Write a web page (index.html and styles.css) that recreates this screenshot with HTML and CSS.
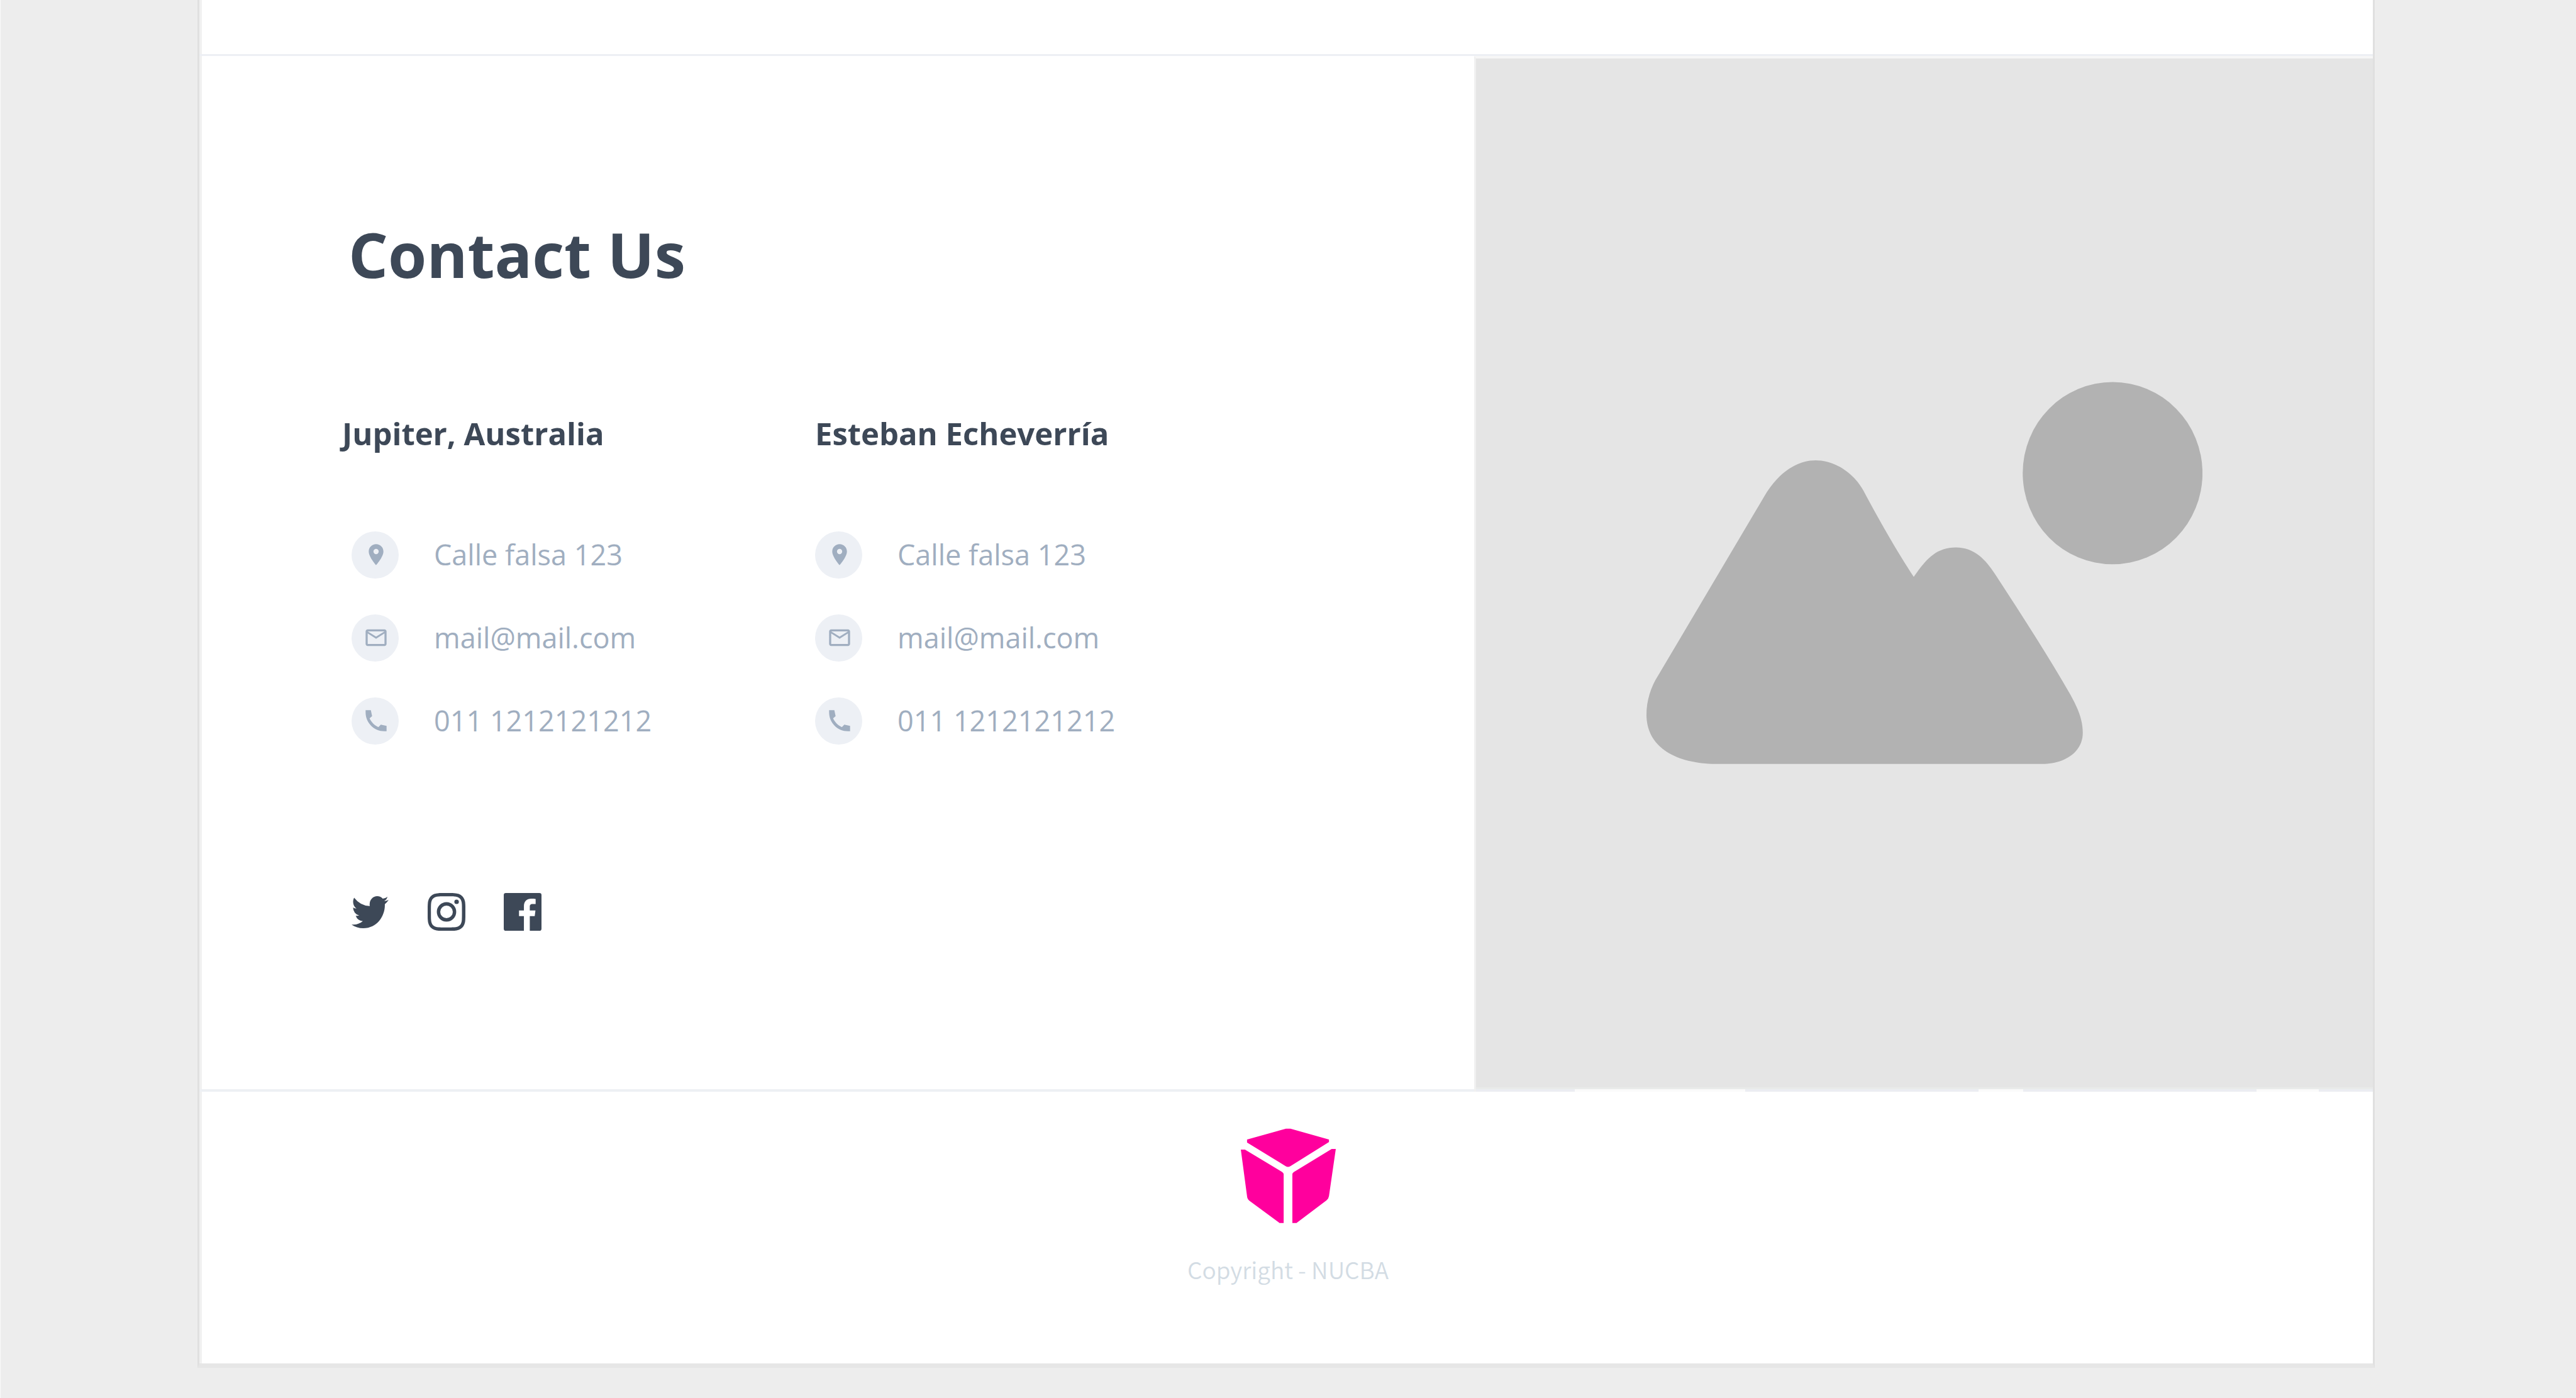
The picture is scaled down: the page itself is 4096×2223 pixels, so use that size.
FILE: index.html
```html
<!DOCTYPE html>
<html lang="en">
<head>
<meta charset="utf-8">
<title>Contact Us - NUCBA</title>
<link rel="stylesheet" href="styles.css">
</head>
<body>
<svg class="sprite" aria-hidden="true">
  <symbol id="pin" viewBox="0 0 24 24"><path fill-rule="evenodd" d="M12 2C8.100 2 5 5.100 5 9c0 5.200 7 13 7 13s7-7.800 7-13c0-3.900-3.100-7-7-7zm0 9.500a2.500 2.500 0 1 1 0-5 2.500 2.500 0 0 1 0 5z"/></symbol>
  <symbol id="mail" viewBox="0 0 24 24"><path fill-rule="evenodd" d="M20 4H4c-1.100 0-2 .9-2 2v12c0 1.100.9 2 2 2h16c1.100 0 2-.9 2-2V6c0-1.100-.9-2-2-2zm0 14H4V8l8 5 8-5v10zm-8-7L4 6h16l-8 5z"/></symbol>
  <symbol id="phone" viewBox="0 0 24 24"><path d="M2 2h5l1.200 5.600-2.400 2.200c1.600 3.600 4.700 6.700 8.400 8.400l2.300-2.500L22 17v5h-2C10 22 2 14 2 4z"/></symbol>
</svg>
<div class="page">
  <div class="previous"></div>
  <main class="contact">
    <section class="details">
      <h1 class="title">Contact Us</h1>
      <div class="offices">
        <address class="office">
          <h2 class="city city-first">Jupiter, Australia</h2>
          <ul class="lines">
            <li class="line"><span class="badge"><svg class="glyph"><use href="#pin"/></svg></span>Calle falsa 123</li>
            <li class="line"><span class="badge"><svg class="glyph"><use href="#mail"/></svg></span><a class="link" href="mailto:mail@mail.com">mail@mail.com</a></li>
            <li class="line"><span class="badge"><svg class="glyph"><use href="#phone"/></svg></span><a class="link" href="tel:0111212121212">011 1212121212</a></li>
          </ul>
        </address>
        <address class="office">
          <h2 class="city">Esteban Echeverría</h2>
          <ul class="lines">
            <li class="line"><span class="badge"><svg class="glyph"><use href="#pin"/></svg></span>Calle falsa 123</li>
            <li class="line"><span class="badge"><svg class="glyph"><use href="#mail"/></svg></span><a class="link" href="mailto:mail@mail.com">mail@mail.com</a></li>
            <li class="line"><span class="badge"><svg class="glyph"><use href="#phone"/></svg></span><a class="link" href="tel:0111212121212">011 1212121212</a></li>
          </ul>
        </address>
      </div>
      <nav class="social" aria-label="Social networks">
        <a class="network" href="#twitter" aria-label="Twitter"><svg class="brand brand-wide" viewBox="2 4 20 16" preserveAspectRatio="none"><path d="M19.633 7.997c.013.175.013.349.013.523 0 5.325-4.053 11.461-11.460 11.461-2.282 0-4.402-.661-6.186-1.809.324.037.636.05.973.05a8.070 8.070 0 0 0 5.001-1.721 4.036 4.036 0 0 1-3.767-2.793c.249.037.499.062.761.062.361 0 .724-.05 1.061-.137a4.027 4.027 0 0 1-3.230-3.953v-.05c.537.299 1.160.486 1.820.511a4.022 4.022 0 0 1-1.796-3.354c0-.748.199-1.434.548-2.032a11.457 11.457 0 0 0 8.306 4.215c-.062-.3-.1-.611-.1-.923a4.026 4.026 0 0 1 4.028-4.028c1.160 0 2.207.486 2.943 1.272a7.957 7.957 0 0 0 2.556-.973 4.020 4.020 0 0 1-1.771 2.220 8.073 8.073 0 0 0 2.319-.624 8.645 8.645 0 0 1-2.019 2.083z"/></svg></a>
        <a class="network" href="#instagram" aria-label="Instagram"><svg class="brand" viewBox="3 3 18 18"><path fill-rule="evenodd" d="M11.999 7.377a4.623 4.623 0 1 0 0 9.248 4.623 4.623 0 0 0 0-9.248zm0 7.627a3.004 3.004 0 1 1 0-6.008 3.004 3.004 0 0 1 0 6.008z"/><circle cx="16.806" cy="7.207" r="1.078"/><path fill-rule="evenodd" d="M20.533 6.111A4.605 4.605 0 0 0 17.900 3.479a6.606 6.606 0 0 0-2.186-.42c-.963-.042-1.268-.054-3.710-.054s-2.755 0-3.710.054a6.554 6.554 0 0 0-2.184.42 4.600 4.600 0 0 0-2.633 2.632 6.585 6.585 0 0 0-.419 2.186c-.043.962-.056 1.267-.056 3.710 0 2.442 0 2.753.056 3.710.015.748.156 1.486.419 2.187a4.610 4.610 0 0 0 2.634 2.632 6.584 6.584 0 0 0 2.185.45c.963.042 1.268.055 3.710.055s2.755 0 3.710-.055a6.615 6.615 0 0 0 2.186-.419 4.613 4.613 0 0 0 2.633-2.633c.263-.7.404-1.438.419-2.186.043-.962.056-1.267.056-3.710s0-2.753-.056-3.710a6.581 6.581 0 0 0-.421-2.217zm-1.218 9.532a5.043 5.043 0 0 1-.311 1.688 2.987 2.987 0 0 1-1.712 1.711 4.985 4.985 0 0 1-1.670.311c-.95.044-1.218.055-3.654.055-2.438 0-2.687 0-3.655-.055a4.960 4.960 0 0 1-1.669-.311 2.985 2.985 0 0 1-1.719-1.711 5.080 5.080 0 0 1-.311-1.669c-.043-.95-.053-1.218-.053-3.654 0-2.437 0-2.686.053-3.655a5.038 5.038 0 0 1 .311-1.687c.305-.789.93-1.410 1.719-1.712a5.010 5.010 0 0 1 1.669-.311c.951-.043 1.218-.055 3.655-.055s2.687 0 3.654.055a4.960 4.960 0 0 1 1.670.311 2.991 2.991 0 0 1 1.712 1.712 5.080 5.080 0 0 1 .311 1.669c.043.951.055 1.218.055 3.655 0 2.436 0 2.698-.043 3.654h-.011z"/></svg></a>
        <a class="network" href="#facebook" aria-label="Facebook"><svg class="brand" viewBox="3 3 18 18"><path d="M20 3H4a1 1 0 0 0-1 1v16a1 1 0 0 0 1 1h8.615v-6.960h-2.338v-2.725h2.338v-2c0-2.325 1.420-3.592 3.500-3.592.699-.002 1.399.034 2.095.107v2.420h-1.435c-1.128 0-1.348.538-1.348 1.325v1.735h2.697l-.35 2.725h-2.348V21H20a1 1 0 0 0 1-1V4a1 1 0 0 0-1-1z"/></svg></a>
      </nav>
    </section>
    <div class="photo">
      <div class="picture">
        <svg class="placeholder" viewBox="74 122 1398 1378" preserveAspectRatio="none" role="img" aria-label="Picture placeholder">
          <ellipse cx="1246" cy="451" rx="226" ry="328"/>
          <path d="M74 1320C74 1270 85 1220 103 1180L370 535C400 460 447 405 499 405C548 405 595 450 620 515C655 610 705 735 746 824C775 765 800 718 852 718C900 718 928 765 950 813C1015 955 1080 1100 1140 1248C1160 1300 1171 1340 1171 1385C1171 1455 1125 1495 1075 1497L240 1497C140 1492 74 1430 74 1320Z"/>
        </svg>
      </div>
      <div class="seam"></div>
    </div>
  </main>
  <footer class="footer">
    <svg class="logo" viewBox="342 98 459 457" role="img" aria-label="NUCBA">
      <path d="M372 152L560 99H582L768 152V164L582 280Q570 288 558 280L372 166ZM342 200H362L541 308Q549 313 549 319V555H529L384 448Q373 440 372 425ZM801 197H781L599 308Q591 313 591 319V555H611L756 446Q766 438 768 425Z"/>
    </svg>
    <p class="copyright">Copyright - NUCBA</p>
  </footer>
</div>
</body>
</html>
```
FILE: styles.css
```css
* {
  box-sizing: border-box;
}

body {
  margin: 0;
  background: #ededed;
  border-left: 1px solid #fafafa;
  color: #3d4857;
  font-family: "Open Sans", "Noto Sans", sans-serif;
}

.sprite {
  display: none;
}

.page {
  margin: 0 320px 48px 313px;
  background: #fff;
  border: 3px solid #e0e0e0;
  border-top: 0;
  border-bottom: 7px solid #e6e6e6;
  box-shadow: inset 4px 0 #f1f1f1;
}

.previous {
  height: 86px;
}

.contact {
  display: grid;
  grid-template-columns: 2027fr 1429fr;
  border-top: 3px solid #edeff4;
}

.details {
  padding: 247px 0 252px 242px;
  border-bottom: 4px solid #edf0f4;
}

.title {
  margin: 0 0 185px -5px;
  font-size: 99px;
  line-height: 136px;
  font-weight: 700;
}

.offices {
  display: grid;
  grid-template-columns: 737px 1fr;
}

.office {
  font-style: normal;
}

.city {
  margin: 0 0 123px;
  font-size: 49px;
  line-height: 64px;
  font-weight: 700;
}

.city-first {
  margin-left: -15px;
}

.lines {
  display: grid;
  gap: 56px;
  margin: 0;
  padding: 0;
  list-style: none;
  color: #a0aec0;
  font-size: 45px;
  line-height: 76px;
}

.line {
  display: flex;
  align-items: center;
  height: 76px;
  gap: 56px;
}

.badge {
  display: flex;
  align-items: center;
  justify-content: center;
  width: 75px;
  height: 75px;
  padding-left: 3px;
  border-radius: 50%;
  background: #edf0f5;
}

.glyph {
  width: 40px;
  height: 40px;
  fill: #a0aec0;
}

.link {
  color: inherit;
  text-decoration: none;
}

.social {
  display: flex;
  gap: 61px;
  margin-top: 236px;
}

.network {
  display: flex;
  align-items: center;
  color: inherit;
}

.brand {
  width: 60px;
  height: 60px;
  fill: currentColor;
}

.brand-wide {
  height: 51px;
}

.photo {
  display: grid;
  grid-template-rows: 1fr 7px;
  border-top: 4px solid #f6f6f6;
  border-left: 3px solid #f0f0f0;
}

.picture {
  display: flex;
  align-items: center;
  justify-content: center;
  background: #e5e5e5;
}

.placeholder {
  width: 62%;
  height: 609px;
  fill: #b2b2b2;
}

/* The dividing line under the picture is broken in three places. */
.seam {
  border-top: 3px solid #e9ebea;
  background: linear-gradient(to right,
    #ecedf2 11%, #fbfbfb 11% 30%,
    #ecedf2 30% 56%, #fbfbfb 56% 61%,
    #ecedf2 61% 87%, #fbfbfb 87% 94%,
    #ecedf2 94%);
}

.footer {
  display: flex;
  flex-direction: column;
  align-items: center;
  padding: 58px 0 122px 6px;
}

.logo {
  width: 151px;
  height: 151px;
  fill: #ff009d;
}

.copyright {
  margin: 45px 0 0;
  color: #d3dce4;
  font-family: "Noto Sans CJK SC", "Open Sans", sans-serif;
  font-size: 37px;
  font-weight: 350;
  line-height: 56px;
}
```
